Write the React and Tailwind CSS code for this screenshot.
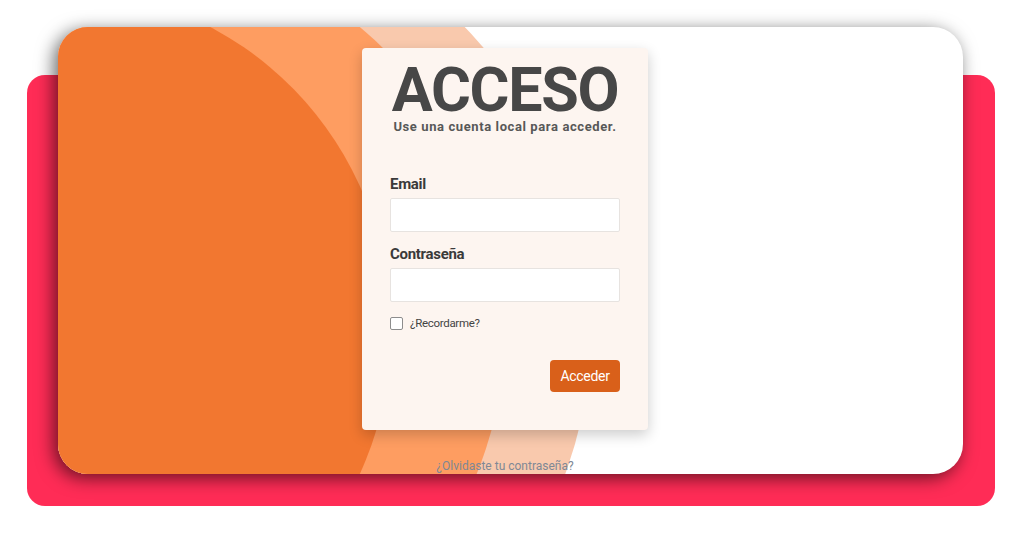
export default function App() {
  return (
    <div className="w-[1024px] h-[536px] bg-white overflow-hidden font-['Roboto','Liberation_Sans',sans-serif]">
      <div className="grid">
        <div className="col-start-1 row-start-1 ml-[27px] mt-[75px] w-[968px] h-[431px] rounded-[18px] bg-[#ff2c56]" />
        <div className="col-start-1 row-start-1 ml-[58px] mt-[27px] w-[905px] h-[447px] rounded-[30px] bg-white relative overflow-hidden shadow-[-4px_4px_18px_rgba(0,0,0,0.6)]">
          <svg className="absolute inset-0" width="905" height="447" viewBox="0 0 905 447">
            <ellipse cx="2" cy="303" rx="531" ry="468" fill="#f9c9ad" />
            <ellipse cx="2" cy="303" rx="445" ry="410" fill="#fe9d61" />
            <ellipse cx="2" cy="303" rx="331" ry="340" fill="#f27730" />
          </svg>
          <div className="relative flex flex-col items-start pl-[304px] pt-[21px]">
            <div className="w-[286px] bg-[#fdf5f0] rounded-[4px] shadow-[0_5px_14px_rgba(0,0,0,0.2)] px-[28px] pt-[16px] pb-[38px] flex flex-col">
              <div className="text-center text-[61px] leading-[52px] font-bold text-[#474747] tracking-[-1.3px]">ACCESO</div>
              <div className="mt-[3px] text-center text-[13px] leading-[16px] font-bold text-[#585858] tracking-[0.6px]">Use una cuenta local para acceder.</div>
              <div className="mt-[39px] h-[20px] mb-[4px] text-[15px] leading-[20px] font-bold text-[#3a3a3a] tracking-[-0.3px]">Email</div>
              <div className="h-[34px] w-full bg-white border border-[#e7e3e0] rounded-[2px]" />
              <div className="mt-[12px] h-[20px] mb-[4px] text-[15px] leading-[20px] font-bold text-[#3a3a3a] tracking-[-0.3px]">Contraseña</div>
              <div className="h-[34px] w-full bg-white border border-[#e7e3e0] rounded-[2px]" />
              <div className="mt-[15px] h-[13px] flex items-center gap-[7px]">
                <span className="w-[13px] h-[13px] border border-[#8d8d8d] rounded-[2px] bg-white" />
                <span className="text-[11.5px] leading-[13px] text-[#444] tracking-[-0.3px]">¿Recordarme?</span>
              </div>
              <div className="mt-[30px] flex justify-end">
                <button className="w-[70px] h-[32px] bg-[#d9601a] rounded-[4px] text-white text-[14px] tracking-[-0.3px]">Acceder</button>
              </div>
            </div>
            <div className="w-[286px] mt-[28px] text-center text-[12px] leading-[16px] text-[#7f8895]">¿Olvidaste tu contraseña?</div>
          </div>
        </div>
      </div>
    </div>
  );
}
